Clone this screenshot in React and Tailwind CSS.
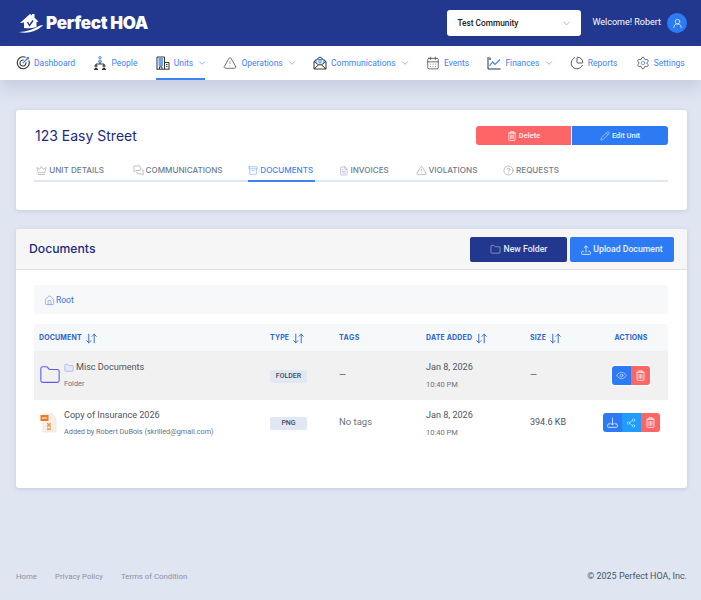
import { Archive, ArrowDownUp, CalendarDays, ChartPie, ChevronDown, CircleHelp, Crown, Eye, FileText, Folder, House, MessagesSquare, Pencil, Settings, Share2, TriangleAlert, UserRound } from 'lucide-react'

const blue = '#3f83f0'
const dark = '#333'

function TargetIcon() {
  return (
    <svg width="14" height="14" viewBox="0 0 14 14" fill="none" stroke={dark} strokeWidth="1.1">
      <path d="M9.5 1.2A6 6 0 1 0 12.8 4.5" />
      <path d="M7.6 4.1A3 3 0 1 0 9.9 6.4" />
      <path d="M6.8 7.2L11 3" stroke={blue} strokeWidth="1.2" />
      <path d="M10.3 2.8L10.8 1L13 .9L12.8 3.2L11 3.6Z" fill={blue} stroke="none" />
    </svg>
  )
}

function PeopleIcon() {
  return (
    <svg width="14" height="14" viewBox="0 0 14 14" fill="none" stroke={dark} strokeWidth="1">
      <circle cx="7" cy="1.8" r="1.2" stroke={blue} />
      <path d="M5.4 6V5.2Q7 3.6 8.6 5.2V6Z" stroke={blue} />
      <path d="M7 6.2V8M3 10V8H11V10" />
      <circle cx="3" cy="10" r="1.1" />
      <circle cx="11" cy="10" r="1.1" />
      <path d="M1 13.5Q3 10.8 5 13.5ZM9 13.5Q11 10.8 13 13.5Z" />
    </svg>
  )
}

function BuildingIcon() {
  return (
    <svg width="14" height="14" viewBox="0 0 14 14" fill="none" stroke={dark} strokeWidth="1">
      <path d="M1 13.2V1H8.5V13.2M.5 13.2H13.5M8.5 6.5H13V13.2" />
      <path d="M2.5 3H7M2.5 5H7M2.5 7H7M2.5 9H7" stroke={blue} strokeWidth="1.3" />
      <path d="M3.5 13V10.8H6V13M10 8.5H11.5M10 10.5H11.5" />
    </svg>
  )
}

function MailIcon() {
  return (
    <svg width="14" height="14" viewBox="0 0 14 14" fill="none" stroke={dark} strokeWidth="1">
      <path d="M1 5.5L7 1L13 5.5V13H1Z" />
      <path d="M1 13L5.5 8.8M13 13L8.5 8.8M1 5.5L5.5 8.8H8.5L13 5.5" />
      <path d="M3 7V3.5H11V7" stroke={blue} strokeWidth="1.1" />
      <path d="M4.8 5H9.2M5.5 6.8H8.5" stroke={blue} strokeWidth="1" />
    </svg>
  )
}

function FinanceIcon() {
  return (
    <svg width="14" height="14" viewBox="0 0 14 14" fill="none" stroke={dark} strokeWidth="1">
      <path d="M1 1V13H13.5" />
      <path d="M2.5 10L5.5 6L8 8.5L13 3.5" stroke={blue} strokeWidth="1.2" />
      <path d="M3 1.5V4" strokeWidth="1.2" />
    </svg>
  )
}

function TrashIcon({ size = 11, stroke = 1 }) {
  return (
    <svg width={size} height={size} viewBox="0 0 12 12" fill="none" stroke="currentColor" strokeWidth={stroke}>
      <rect x="2.2" y="2.4" width="7.6" height="9" rx="1" />
      <path d="M1.5 2.4H10.5M4.2 2.2V.8H7.8V2.2M4.4 4.5V9.5M6 4.5V9.5M7.6 4.5V9.5" />
    </svg>
  )
}

function TrayIcon({ up, size = 11 }) {
  return (
    <svg width={size} height={size} viewBox="0 0 12 12" fill="none" stroke="currentColor" strokeWidth="1">
      <path d="M3.2 7.5H1.4Q.6 9 .6 10.2Q.6 11.3 1.6 11.3H10.4Q11.4 11.3 11.4 10.2Q11.4 9 10.6 7.5H8.8" />
      {up ? <path d="M6 8.8V1M3.5 3.4L6 .9L8.5 3.4" /> : <path d="M6 .8V8.6M3.5 6.2L6 8.8L8.5 6.2" />}
    </svg>
  )
}

const nav = [
  { label: 'Dashboard', icon: <TargetIcon /> },
  { label: 'People', icon: <PeopleIcon /> },
  { label: 'Units', icon: <BuildingIcon />, caret: true, active: true },
  { label: 'Operations', icon: <TriangleAlert size={14} strokeWidth={1.2} className="text-[#333] [&>path:not(:first-child)]:stroke-[#3f83f0]" />, caret: true },
  { label: 'Communications', icon: <MailIcon />, caret: true },
  { label: 'Events', icon: <CalendarDays size={14} strokeWidth={1.2} className="text-[#333]" /> },
  { label: 'Finances', icon: <FinanceIcon />, caret: true },
  { label: 'Reports', icon: <ChartPie size={14} strokeWidth={1.4} className="text-[#333]" /> },
  { label: 'Settings', icon: <Settings size={14} strokeWidth={1.2} className="text-[#333] [&>circle]:stroke-[#3f83f0]" /> },
]

const tabs = [
  { label: 'UNIT DETAILS', icon: Crown, width: 'w-[72px]' },
  { label: 'COMMUNICATIONS', icon: MessagesSquare, width: 'w-[95px]' },
  { label: 'DOCUMENTS', icon: Archive, active: true, width: 'w-[67px]' },
  { label: 'INVOICES', icon: FileText, width: 'w-[52px]' },
  { label: 'VIOLATIONS', icon: TriangleAlert, width: 'w-[65px]' },
  { label: 'REQUESTS', icon: CircleHelp, width: 'w-[58px]' },
]

function Logo() {
  return (
    <div className="flex items-center">
      <svg width="26" height="20" viewBox="0 0 26 20" className="mr-[2px]">
        <path d="M2 10 L12 1 L14 2.6 L14 1 L16.5 1 L16.5 4.8 L20.5 8.5 L18.5 9 L18.5 14 Q12 16 6 15 L6 9.6 Z" fill="#fff" />
        <path d="M9.5 9 L11.5 12.5 L15 7.5" stroke="#22388f" strokeWidth="1.4" fill="none" />
        <path d="M0.5 19 Q10 19.5 22 12.5 Q26 12 25 12.5 Q14 22 0.5 19 Z" fill="#fff" />
      </svg>
      <span className="font-['Inter',sans-serif] text-[17px] font-black tracking-[-0.3px] text-white leading-none">Perfect HOA</span>
    </div>
  )
}

function SortHead({ label }) {
  return (
    <div className="flex items-center gap-[3px] pl-[5px]">
      <span>{label}</span>
      <ArrowDownUp size={13} strokeWidth={1.7} />
    </div>
  )
}

function IconBtn({ children, color, first, last }) {
  return (
    <button className={`flex h-[19px] w-[19px] items-center justify-center text-white/80 ${color} ${first ? 'rounded-l-[3px]' : ''} ${last ? 'rounded-r-[3px]' : ''}`}>
      {children}
    </button>
  )
}

const cols = 'grid grid-cols-[231px_69px_87px_104px_69px_74px] items-center'

export default function App() {
  return (
    <div className="flex min-h-[600px] flex-col bg-[#dfe5f1] font-['Roboto',sans-serif]">
      <header className="flex h-[46px] items-center justify-between bg-[#22388f] pl-[18px] pr-[14px]">
        <Logo />
        <div className="flex items-center">
          <div className="mr-[11px] flex h-[26px] w-[134px] items-center justify-between rounded-[3px] bg-white pl-[10px] pr-[9px] text-[8.3px] font-medium text-[#222]">
            <span>Test Community</span>
            <ChevronDown size={11} strokeWidth={1.2} className="text-[#777]" />
          </div>
          <span className="mr-[6px] text-[9px] text-white">Welcome! Robert</span>
          <div className="flex h-[20px] w-[20px] items-center justify-center rounded-full bg-[#2d7bf4]">
            <UserRound size={11} strokeWidth={1.5} className="text-white" />
          </div>
        </div>
      </header>

      <nav className="flex h-[34px] items-stretch gap-[18.3px] bg-white pl-[16px] shadow-[0_8px_16px_rgba(150,160,185,0.35)]">
        {nav.map((item) => (
          <div key={item.label} className={`flex items-center gap-[4px] text-[8.5px] text-[#3f83f0] ${item.active ? 'border-b-2 border-[#3f83f0] pt-[2px]' : ''}`}>
            {item.icon}
            <span>{item.label}</span>
            {item.caret && <ChevronDown size={10} strokeWidth={1.4} className="-ml-[2px] translate-x-[2px]" />}
          </div>
        ))}
      </nav>

      <main className="ml-[16px] mr-[14px] mt-[30px] flex flex-col gap-[19px]">
        <section className="h-[100px] rounded-[3px] bg-white pl-[18px] pr-[19px] pt-[16px] shadow-[0_1px_4px_rgba(120,130,160,0.25)]">
          <div className="flex items-center justify-between">
            <h1 className="ml-[1px] font-['Inter',sans-serif] text-[14px] leading-[19px] text-[#1c2a80]">123 Easy Street</h1>
            <div className="flex">
              <button className="flex h-[19px] w-[95px] items-center justify-center gap-[2px] rounded-l-[3px] bg-[#fd6567] text-[7.5px] font-medium text-white/90">
                <TrashIcon size={10} />Delete
              </button>
              <button className="ml-[1px] flex h-[19px] w-[96px] items-center justify-center gap-[2px] rounded-r-[3px] bg-[#2d7bf4] text-[7.5px] font-medium text-white/90">
                <Pencil size={10} strokeWidth={1.2} />Edit Unit
              </button>
            </div>
          </div>
          <div className="mt-[16px] flex h-[21px] gap-[23.6px] border-b-2 border-[#dfe6f5]">
            {tabs.map((tab) => {
              const Icon = tab.icon
              return (
                <div key={tab.label} className={`-mb-[2px] flex items-center justify-end gap-[2px] whitespace-nowrap border-b-2 pr-[2px] font-['Inter',sans-serif] text-[8.1px] font-medium ${tab.width} ${tab.active ? 'border-[#3f83f0] text-[#3f83f0]' : 'border-transparent text-[#6f7c90]'}`}>
                  <Icon size={tab.label === 'INVOICES' ? 10 : 11} strokeWidth={1} />
                  {tab.label}
                </div>
              )
            })}
          </div>
        </section>

        <section className="h-[259px] rounded-[3px] bg-white shadow-[0_1px_4px_rgba(120,130,160,0.25)]">
          <div className="flex h-[41px] items-center justify-between rounded-t-[3px] border-b border-[#e3e3e3] bg-[#f6f6f6] pl-[13px] pr-[13px] pt-[1px]">
            <h2 className="font-['Inter',sans-serif] text-[12.2px] font-medium text-[#1c2a80]">Documents</h2>
            <div className="flex gap-[3px]">
              <button className="flex h-[25px] w-[97px] items-center justify-center gap-[3px] rounded-[2px] bg-[#22388f] text-[8.7px] font-medium text-white/90">
                <Folder size={11} strokeWidth={1} />New Folder
              </button>
              <button className="flex h-[25px] w-[104px] items-center justify-center gap-[2px] rounded-[2px] bg-[#2d7bf4] text-[8.7px] font-medium text-white/90">
                <TrayIcon up size={10} />Upload Document
              </button>
            </div>
          </div>
          <div className="pl-[18px] pr-[19px] pt-[15px]">
            <div className="flex h-[29px] items-center gap-[1px] rounded-[3px] bg-[#f7f8fa] pl-[10px] pt-[1px] text-[8.5px] text-[#3a6fd8]">
              <House size={11} strokeWidth={1} />Root
            </div>
            <div className={`${cols} mt-[10px] h-[27px] rounded-t-[3px] bg-[#f7f8fa] pt-[1px] font-['Inter',sans-serif] text-[7px] font-bold tracking-[0.15px] text-[#2a66cf]`}>
              <SortHead label="DOCUMENT" />
              <SortHead label="TYPE" />
              <div className="pl-[5px] tracking-[0.5px]">TAGS</div>
              <SortHead label="DATE ADDED" />
              <SortHead label="SIZE" />
              <div className="text-center">ACTIONS</div>
            </div>

            <div className={`${cols} h-[49px] bg-[#f1f1f1] text-[#4b5563]`}>
              <div className="flex items-center pl-[5px]">
                <Folder size={22} strokeWidth={1.2} className="text-[#5a5ff0]" />
                <div className="ml-[3px]">
                  <div className="flex items-center gap-[2px] text-[9.1px]">
                    <Folder size={10} strokeWidth={1} className="fill-[#e6e6fb] text-[#7c7ff0]" />Misc Documents
                  </div>
                  <div className="mt-[4px] text-[7.3px] text-[#6b7280]">Folder</div>
                </div>
              </div>
              <div className="flex pl-[5px] pt-[2px]"><span className="flex h-[13px] w-[37px] items-center justify-center rounded-[2px] bg-[#e1e8f3] text-[7px] font-medium text-[#414b5c]">FOLDER</span></div>
              <div className="pl-[5px] text-[9px]">—</div>
              <div className="pl-[5px]">
                <div className="text-[9.1px]">Jan 8, 2026</div>
                <div className="mt-[4px] text-[7.5px] text-[#6b7280]">10:40 PM</div>
              </div>
              <div className="pl-[5px] text-[9px]">—</div>
              <div className="flex justify-center">
                <div className="flex rounded-[3px] ring-1 ring-white">
                  <IconBtn color="bg-[#2d7bf4]" first><Eye size={11} strokeWidth={1.3} /></IconBtn>
                  <IconBtn color="bg-[#fd6567]" last><TrashIcon /></IconBtn>
                </div>
              </div>
            </div>

            <div className={`${cols} h-[49px] pb-[2px] text-[#4b5563]`}>
              <div className="flex items-center pl-[5px]">
                <svg width="18" height="20" viewBox="0 0 18 20" className="ml-[1px] mr-[6px]">
                  <path d="M3 1 H12 L16 5 V19 H3 Z" fill="#f8efe6" stroke="#e4e0da" strokeWidth="0.6" />
                  <rect x="0.5" y="2" width="8" height="6" fill="#ee7b1f" />
                  <rect x="2" y="4.5" width="5" height="1" fill="#fff" />
                  <path d="M7 10 l4 4 m0 -4 l-4 4 M7 12 h4 M9 10 v4 M7 15 l4 2 m0 -2 l-4 2" stroke="#f19548" strokeWidth="1" />
                </svg>
                <div>
                  <div className="text-[9.1px]">Copy of Insurance 2026</div>
                  <div className="mt-[4px] whitespace-nowrap text-[7.3px] text-[#6b7280]">Added by Robert DuBois (skrilled@gmail.com)</div>
                </div>
              </div>
              <div className="flex pl-[5px]"><span className="flex h-[13px] w-[37px] items-center justify-center rounded-[2px] bg-[#e1e8f3] text-[7px] font-medium text-[#414b5c]">PNG</span></div>
              <div className="mb-[2px] pl-[5px] text-[9.5px] text-[#6b7280]">No tags</div>
              <div className="pl-[5px]">
                <div className="text-[9.1px]">Jan 8, 2026</div>
                <div className="mt-[4px] text-[7.5px] text-[#6b7280]">10:40 PM</div>
              </div>
              <div className="mb-[2px] pl-[5px] text-[9px]">394.6 KB</div>
              <div className="mb-[2px] flex justify-center">
                <IconBtn color="bg-[#2d7bf4]" first><TrayIcon /></IconBtn>
                <IconBtn color="bg-[#1f9cff]"><Share2 size={10} strokeWidth={1.3} /></IconBtn>
                <IconBtn color="bg-[#fd6567]" last><TrashIcon /></IconBtn>
              </div>
            </div>
          </div>
        </section>
      </main>

      <footer className="mt-[82px] flex h-[14px] items-center justify-between pl-[16px] pr-[14px] text-[7.8px]">
        <div className="flex gap-[18px] text-[#8a94a6]">
          <span>Home</span>
          <span>Privacy Policy</span>
          <span>Terms of Condition</span>
        </div>
        <span className="text-[9px] text-[#4b5563]">© 2025 Perfect HOA, Inc.</span>
      </footer>
    </div>
  )
}
